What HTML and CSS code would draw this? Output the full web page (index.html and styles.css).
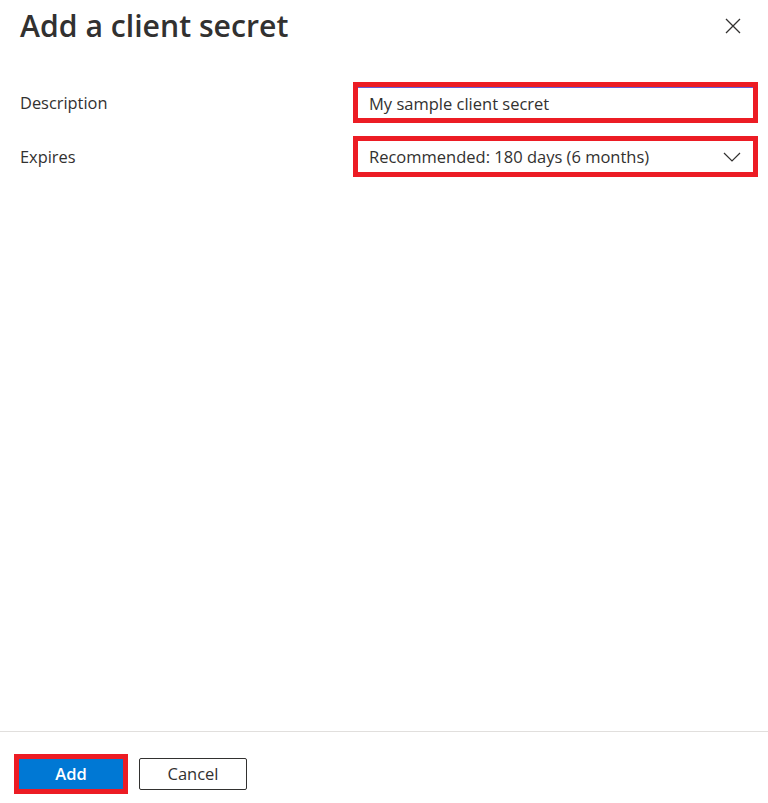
FILE: index.html
```html
<!DOCTYPE html>
<html lang="en">
<head>
<meta charset="utf-8">
<title>Add a client secret</title>
<link rel="stylesheet" href="styles.css">
</head>
<body>
<div class="panel">
  <header class="panel-header">
    <h1 class="title">Add a client secret</h1>
    <button class="close" aria-label="Close">
      <svg width="16" height="16" viewBox="0 0 16 16"><path d="M1 1 L15 15 M15 1 L1 15" stroke="#323130" stroke-width="1.3" fill="none"/></svg>
    </button>
  </header>
  <main class="panel-body">
    <div class="row">
      <label class="label">Description</label>
      <div class="highlight">
        <div class="field field-input">My sample client secret</div>
      </div>
    </div>
    <div class="row">
      <label class="label">Expires</label>
      <div class="highlight">
        <div class="field field-select">
          <span>Recommended: 180 days (6 months)</span>
          <svg class="chevron" width="18" height="10" viewBox="0 0 18 10"><path d="M1 1 L9 9 L17 1" stroke="#323130" stroke-width="1.2" fill="none"/></svg>
        </div>
      </div>
    </div>
  </main>
  <footer class="panel-footer">
    <div class="highlight btn-wrap"><button class="btn btn-primary">Add</button></div>
    <button class="btn btn-default">Cancel</button>
  </footer>
</div>
</body>
</html>
```
FILE: styles.css
```css
* { box-sizing: border-box; }
html, body { margin: 0; padding: 0; background: #fff; }
body {
  font-family: "Segoe UI", "Open Sans", "Noto Sans", sans-serif;
  color: #323130;
}
.panel {
  height: 803px;
  display: flex;
  flex-direction: column;
}
.panel-header {
  display: flex;
  align-items: flex-start;
  justify-content: space-between;
  padding: 3px 27px 0 20px;
}
.title {
  margin: 0;
  font-size: 30.2px;
  font-weight: 600;
  line-height: 45px;
}
.close {
  border: 0;
  background: none;
  padding: 0;
  margin-top: 15px;
  width: 16px;
  height: 16px;
  cursor: pointer;
}
.close svg { display: block; }
.panel-body {
  flex: 1;
  padding: 34px 10px 0 20px;
  display: flex;
  flex-direction: column;
  gap: 13px;
}
.row {
  display: grid;
  grid-template-columns: 333px 405px;
  align-items: center;
}
.label {
  font-size: 16.4px;
  line-height: 20px;
}
.highlight {
  border: 5px solid #ec1c24;
}
.field {
  height: 31px;
  padding: 0 11px;
  font-size: 16.5px;
  display: flex;
  align-items: center;
  background: #fff;
}
.field-input {
  border-top: 1px solid #6a5bd6;
}
.field-select {
  justify-content: space-between;
  padding-right: 12px;
}
.chevron { display: block; }
.panel-footer {
  border-top: 1px solid #e1dfdd;
  height: 72px;
  display: flex;
  align-items: center;
  padding: 12px 14px 0;
  gap: 11px;
}
.btn {
  font-family: inherit;
  font-size: 16.5px;
  border-radius: 2px;
  cursor: pointer;
}
.btn-wrap { display: flex; }
.btn-primary {
  width: 104px;
  height: 30px;
  background: #0078d4;
  color: #fff;
  border: 0;
  font-weight: 600;
  border-radius: 0;
}
.btn-default {
  width: 108px;
  height: 32px;
  background: #fff;
  color: #323130;
  border: 1px solid #323130;
}
```
